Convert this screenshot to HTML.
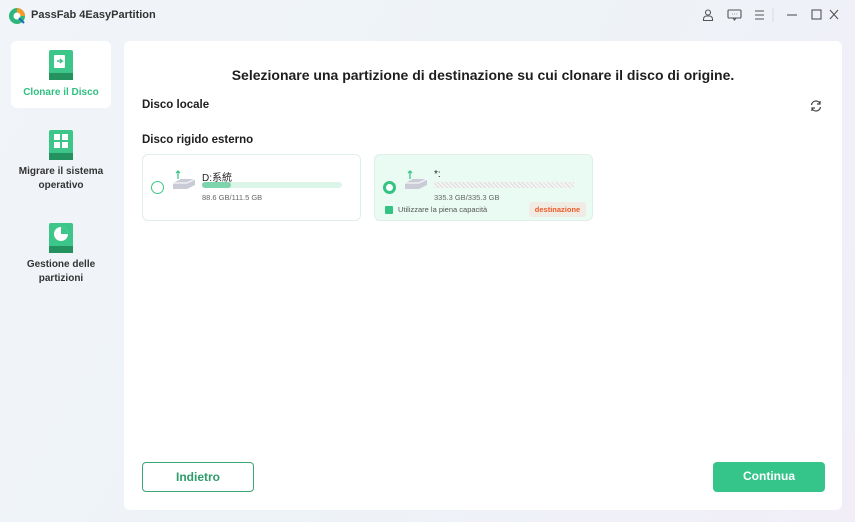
<!DOCTYPE html>
<html><head><meta charset="utf-8"><style>
*{margin:0;padding:0;box-sizing:border-box}
body{width:855px;height:522px;overflow:hidden;font-family:"Liberation Sans","Noto Sans CJK SC",sans-serif;background:linear-gradient(120deg,#f1f4f8 0%,#eef3f7 50%,#f1eef8 100%);position:relative;color:#1e1e1e}
.abs{position:absolute}
.main{left:124px;top:41px;width:718px;height:469px;background:#fff;border-radius:6px}
.side{left:11px;top:41px;width:100px;height:67px;background:#fff;border-radius:6px}
.lbl{font-size:10px;font-weight:bold;text-align:center;width:100px;left:11px;line-height:14px;color:#333}
.card{border:1px solid #dfeee8;border-radius:6px;width:219px;height:67px;top:154px}
.btn{top:462px;width:112px;height:30px;border-radius:4px;font-size:12px;font-weight:bold;text-align:center;line-height:29px}
</style></head><body>
<svg class="abs" style="left:8px;top:7px" width="18" height="18" viewBox="0 0 18 18"><circle cx="9" cy="9" r="8" fill="#2eb67d"/><path d="M9 1A8 8 0 0 1 17 9H9Z" fill="#f59a2a"/><circle cx="9" cy="9" r="3.5" fill="#fff"/><path d="M11 11l5 5" stroke="#1d6fb5" stroke-width="2"/></svg>
<div class="abs" style="left:31px;top:9px;font-size:11px;font-weight:bold;color:#333">PassFab 4EasyPartition</div>
<svg class="abs" style="left:700px;top:8px" width="140" height="14" viewBox="0 0 140 14" fill="none" stroke="#555" stroke-width="1.1"><circle cx="8" cy="4.5" r="2.5"/><path d="M3.5 12.5h9v-1.5a3 3 0 0 0-3-3h-3a3 3 0 0 0-3 3z"/><rect x="28" y="2" width="13" height="8" rx="1"/><path d="M33 10l1.5 2l1.5-2"/><path d="M32 6h.5M34.3 6h.5M36.6 6h.5"/><path d="M55 3h9M55 7h9M55 11h9"/><path d="M73 0v14" stroke="#ddd"/><path d="M87 7h10"/><rect x="112" y="2" width="9" height="9"/><path d="M130 2l8 9M138 2l-8 9"/></svg>
<div class="abs side"></div>
<svg class="abs" style="left:48px;top:49px" width="26" height="32" viewBox="0 0 26 32"><rect x="1" y="1" width="24" height="30" rx="2" fill="#3cc68a"/><rect x="1" y="24" width="24" height="7" fill="#23925f"/><rect x="6" y="6" width="11" height="13" rx="1" fill="#fff"/><path d="M9 12h5l-2-2M14 12l-2 2" stroke="#3cc68a" stroke-width="1.5" fill="none"/></svg>
<div class="abs lbl" style="top:86px;color:#2fbf80">Clonare il Disco</div>
<svg class="abs" style="left:48px;top:129px" width="26" height="32" viewBox="0 0 26 32"><rect x="1" y="1" width="24" height="30" rx="2" fill="#3cc68a"/><rect x="1" y="24" width="24" height="7" fill="#23925f"/><rect x="6" y="5" width="6" height="6" fill="#fff"/><rect x="14" y="5" width="6" height="6" fill="#fff"/><rect x="6" y="13" width="6" height="6" fill="#fff"/><rect x="14" y="13" width="6" height="6" fill="#fff"/></svg>
<div class="abs lbl" style="top:165px">Migrare il sistema<br>operativo</div>
<svg class="abs" style="left:48px;top:222px" width="26" height="32" viewBox="0 0 26 32"><rect x="1" y="1" width="24" height="30" rx="2" fill="#3cc68a"/><rect x="1" y="24" width="24" height="7" fill="#23925f"/><circle cx="13" cy="12" r="7" fill="#fff"/><path d="M13 12V5a7 7 0 0 1 7 7z" fill="#3cc68a"/></svg>
<div class="abs lbl" style="top:258px">Gestione delle<br>partizioni</div>
<div class="abs main"></div>
<div class="abs" style="left:124px;width:718px;top:67px;text-align:center;font-size:14px;font-weight:bold">Selezionare una partizione di destinazione su cui clonare il disco di origine.</div>
<div class="abs" style="left:142px;top:99px;font-size:11.5px;font-weight:bold">Disco locale</div>
<svg class="abs" style="left:809px;top:99px" width="14" height="14" viewBox="0 0 14 14" fill="none" stroke="#444" stroke-width="1.2"><path d="M2.5 6a4.5 4.5 0 0 1 8.5-1.5M11.5 8a4.5 4.5 0 0 1-8.5 1.5"/><path d="M11 2v3H8M3 12V9h3"/></svg>
<div class="abs" style="left:142px;top:134px;font-size:11.5px;font-weight:bold">Disco rigido esterno</div>
<div class="abs card" style="left:142px;background:#fff"></div>
<div class="abs" style="left:151px;top:181px;width:13px;height:13px;border:1.3px solid #3cc68a;border-radius:50%"></div>
<svg class="abs" style="left:172px;top:170px" width="24" height="22" viewBox="0 0 24 22"><path d="M6 1v8M4 3l2-2 2 2" stroke="#3cc68a" stroke-width="1.3" fill="none"/><path d="M1 13l8-4h14v6l-8 4H1z" fill="#c9ccd6"/><path d="M1 13h14l8-4" fill="none" stroke="#fff"/></svg>
<div class="abs" style="left:202px;top:169px;font-size:10px">D:系統</div>
<div class="abs" style="left:202px;top:182px;width:140px;height:6px;border-radius:3px;background:#dbf5e9"></div>
<div class="abs" style="left:202px;top:182px;width:29px;height:6px;border-radius:3px;background:#7dd4ad"></div>
<div class="abs" style="left:202px;top:193px;font-size:7.5px;color:#666">88.6 GB/111.5 GB</div>
<div class="abs card" style="left:374px;background:#e9fbf3"></div>
<div class="abs" style="left:383px;top:181px;width:13px;height:13px;border:3.5px solid #33c383;border-radius:50%;background:#fff"></div>
<svg class="abs" style="left:404px;top:170px" width="24" height="22" viewBox="0 0 24 22"><path d="M6 1v8M4 3l2-2 2 2" stroke="#3cc68a" stroke-width="1.3" fill="none"/><path d="M1 13l8-4h14v6l-8 4H1z" fill="#c9ccd6"/><path d="M1 13h14l8-4" fill="none" stroke="#fff"/></svg>
<div class="abs" style="left:434px;top:169px;font-size:10px">*:</div>
<div class="abs" style="left:434px;top:182px;width:140px;height:6px;background:repeating-linear-gradient(45deg,#ddd 0 1px,#f4f4f4 1px 3px)"></div>
<div class="abs" style="left:434px;top:193px;font-size:7.5px;color:#666">335.3 GB/335.3 GB</div>
<div class="abs" style="left:385px;top:206px;width:8px;height:8px;background:#33c383;border-radius:1px"></div>
<div class="abs" style="left:398px;top:205px;font-size:7.5px;color:#555">Utilizzare la piena capacità</div>
<div class="abs" style="left:529px;top:202px;width:57px;height:15px;background:#f0ece4;border-radius:3px;font-size:7.5px;font-weight:bold;color:#f05a28;text-align:center;line-height:15px">destinazione</div>
<div class="abs btn" style="left:142px;border:1.5px solid #3aa676;color:#2e9b6a">Indietro</div>
<div class="abs btn" style="left:713px;background:#35c58a;color:#fff">Continua</div>
</body></html>
